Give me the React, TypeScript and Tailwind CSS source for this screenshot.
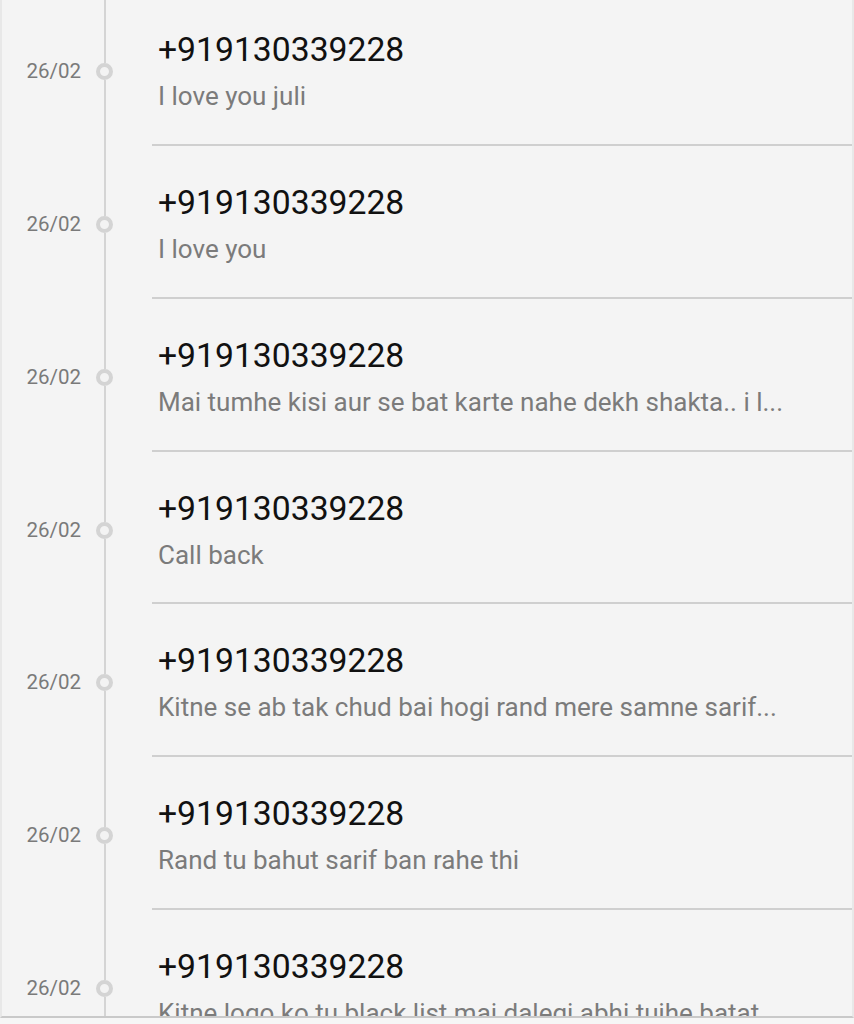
import React from 'react';

// Message log rows shown on the timeline
const MESSAGES = [
    { id: 1, date: "26/02", from: "+919130339228", body: "I love you juli" },
    { id: 2, date: "26/02", from: "+919130339228", body: "I love you" },
    { id: 3, date: "26/02", from: "+919130339228", body: "Mai tumhe kisi aur se bat karte nahe dekh shakta.. i l..." },
    { id: 4, date: "26/02", from: "+919130339228", body: "Call back" },
    { id: 5, date: "26/02", from: "+919130339228", body: "Kitne se ab tak chud bai hogi rand mere samne sarif..." },
    { id: 6, date: "26/02", from: "+919130339228", body: "Rand tu bahut sarif ban rahe thi" },
    { id: 7, date: "26/02", from: "+919130339228", body: "Kitne logo ko tu black list mai dalegi abhi tujhe batat" },
];

function MessageRow({ date, from, body }: { date: string; from: string; body: string }) {
    return (
        <div className="flex h-[152.8px] shrink-0">
            {/* Timeline column */}
            <div className="flex w-[150px] shrink-0">
                <div className="w-[94px] pt-[64px] pr-[15px] text-right text-[20.5px] leading-[28px] text-[#7a7a7a]">
                    {date}
                </div>
                <div className="flex w-[17px] flex-col items-center">
                    <div className="h-[70px] w-[2px] bg-[#d4d4d4]" />
                    <div className="h-[17px] w-[17px] rounded-full border-[4px] border-[#d4d4d4] bg-[#f3f3f3]" />
                    <div className="w-[2px] flex-1 bg-[#d4d4d4]" />
                </div>
            </div>

            {/* Message */}
            <div className="flex min-w-0 flex-1 flex-col border-b-2 border-[#cfcfcf] pl-[6px] pt-[37px]">
                <div className="text-[33.7px] leading-[40px] text-[#111111]">{from}</div>
                <div className="mt-[10px] whitespace-nowrap text-[26px] leading-[32px] text-[#7b7b7b]">{body}</div>
            </div>
        </div>
    );
}

export default function App() {
    return (
        <main
            className="flex h-[1024px] w-[854px] flex-col overflow-hidden bg-[#f4f4f4]"
            style={{ fontFamily: 'Roboto, "Noto Sans", sans-serif' }}
        >
            <div className="flex h-[1018px] flex-col overflow-hidden border-x-2 border-[#e8e8e8] border-b-2 border-b-[#c9c9c9]">
                <div className="-mt-[6.8px] flex flex-col">
                    {MESSAGES.map((m) => (
                        <MessageRow key={m.id} date={m.date} from={m.from} body={m.body} />
                    ))}
                </div>
            </div>
            <div className="flex-1 bg-[#f6f6f6]" />
        </main>
    );
}
